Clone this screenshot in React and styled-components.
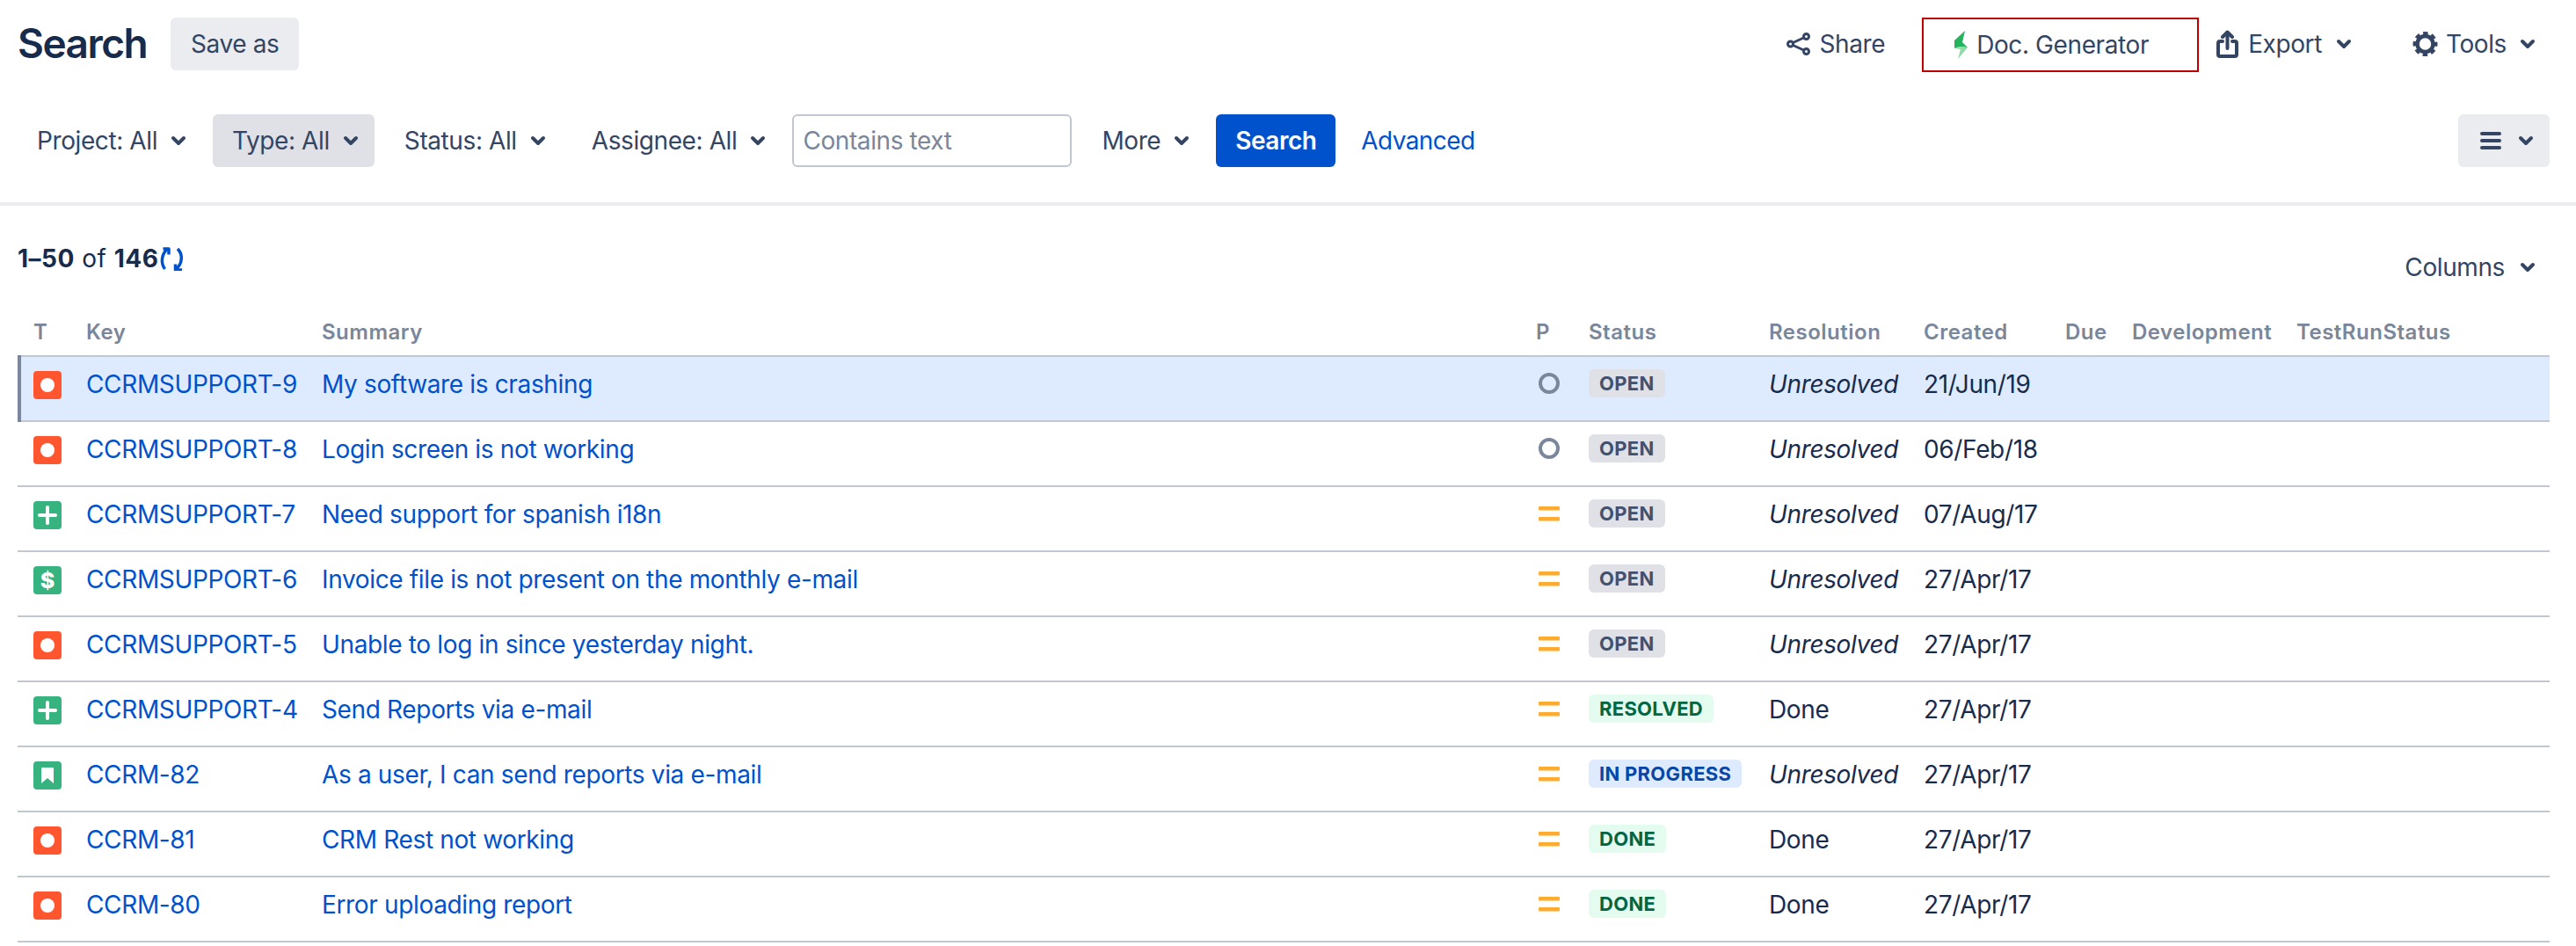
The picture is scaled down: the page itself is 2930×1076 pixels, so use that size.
import React from "react";
import styled, { createGlobalStyle, css } from "styled-components";

const issues = [
  { type: "bug", key: "CCRMSUPPORT-9", summary: "My software is crashing", priority: "low", status: "OPEN", resolution: "Unresolved", created: "21/Jun/19", selected: true },
  { type: "bug", key: "CCRMSUPPORT-8", summary: "Login screen is not working", priority: "low", status: "OPEN", resolution: "Unresolved", created: "06/Feb/18" },
  { type: "feature", key: "CCRMSUPPORT-7", summary: "Need support for spanish i18n", priority: "medium", status: "OPEN", resolution: "Unresolved", created: "07/Aug/17" },
  { type: "billing", key: "CCRMSUPPORT-6", summary: "Invoice file is not present on the monthly e-mail", priority: "medium", status: "OPEN", resolution: "Unresolved", created: "27/Apr/17" },
  { type: "bug", key: "CCRMSUPPORT-5", summary: "Unable to log in since yesterday night.", priority: "medium", status: "OPEN", resolution: "Unresolved", created: "27/Apr/17" },
  { type: "feature", key: "CCRMSUPPORT-4", summary: "Send Reports via e-mail", priority: "medium", status: "RESOLVED", resolution: "Done", created: "27/Apr/17" },
  { type: "story", key: "CCRM-82", summary: "As a user, I can send reports via e-mail", priority: "medium", status: "IN PROGRESS", resolution: "Unresolved", created: "27/Apr/17" },
  { type: "bug", key: "CCRM-81", summary: "CRM Rest not working", priority: "medium", status: "DONE", resolution: "Done", created: "27/Apr/17" },
  { type: "bug", key: "CCRM-80", summary: "Error uploading report", priority: "medium", status: "DONE", resolution: "Done", created: "27/Apr/17" },
];

const headers = ["T", "Key", "Summary", "P", "Status", "Resolution", "Created", "Due", "Development", "TestRunStatus"];

const GlobalStyle = createGlobalStyle`
  html, body {
    margin: 0;
    background: #fff;
  }
  body {
    font-family: Inter, "Liberation Sans", sans-serif;
    font-size: 28px;
    color: #172b4d;
  }
`;

const Page = styled.div`
  width: 2930px;
  height: 1076px;
  overflow: hidden;
`;

const TopBar = styled.header`
  display: flex;
  align-items: flex-start;
  height: 82px;
  box-sizing: border-box;
  padding: 20px 30px 0 20px;
`;

const Title = styled.h1`
  margin: 0 28px 0 0;
  width: 146px;
  font-size: 46px;
  font-weight: 600;
  line-height: 58px;
  letter-spacing: -1.5px;
  white-space: nowrap;
  color: #172b4d;
`;

const plainText = css`
  font-family: inherit;
  font-size: 28px;
  letter-spacing: -0.4px;
  line-height: 40px;
  color: #344563;
`;

const SaveButton = styled.button`
  ${plainText}
  height: 60px;
  padding: 0 23px;
  border: 0;
  border-radius: 6px;
  background: #ebecf0;
`;

const ToolGroup = styled.div`
  display: flex;
  align-items: flex-start;
  margin-left: auto;
`;

const ToolButton = styled.button`
  ${plainText}
  display: flex;
  align-items: center;
  gap: ${(p) => p.$gap || 11}px;
  height: 60px;
  padding: 0 ${(p) => p.$right || 20}px 0 20px;
  margin-right: ${(p) => p.$after || 0}px;
  border: 0;
  background: none;
`;

const DocBox = styled.div`
  ${plainText}
  display: flex;
  align-items: center;
  gap: 9px;
  width: 315px;
  height: 62px;
  box-sizing: border-box;
  padding-left: 35px;
  border: 2px solid #bf0000;
`;

const FilterBar = styled.div`
  display: flex;
  align-items: center;
  gap: 12px;
  height: 60px;
  margin-top: 48px;
  padding: 0 30px 0 20px;
`;

const FilterButton = styled.button`
  ${plainText}
  display: flex;
  align-items: center;
  gap: 15px;
  height: 60px;
  padding: 0 18px 0 22px;
  border: 0;
  border-radius: 6px;
  background: ${(p) => (p.$active ? "#dfe1e6" : "transparent")};
`;

const ViewButton = styled(FilterButton)`
  gap: 19px;
  margin-left: auto;
  padding-left: 25px;
  background: #ebecf0;
`;

const TextField = styled.input`
  ${plainText}
  width: 318px;
  height: 60px;
  box-sizing: border-box;
  padding: 0 10px;
  border: 2px solid #c1c7d0;
  border-radius: 6px;
  outline: 0;
  &::placeholder {
    color: #7a869a;
    opacity: 1;
  }
`;

const SearchButton = styled.button`
  font-family: inherit;
  font-size: 28px;
  font-weight: 600;
  letter-spacing: -0.5px;
  height: 60px;
  padding: 0 22px;
  border: 0;
  border-radius: 6px;
  color: #fff;
  background: #0052cc;
`;

const AdvancedLink = styled.a`
  ${plainText}
  letter-spacing: -0.6px;
  margin-left: 17px;
  color: #0052cc;
`;

const Divider = styled.hr`
  height: 4px;
  margin: 40px 0 0;
  border: 0;
  background: #ebecf0;
`;

const ResultsBar = styled.div`
  display: flex;
  justify-content: space-between;
  align-items: flex-start;
  height: 118px;
  box-sizing: border-box;
  padding: 40px 16px 0 20px;
  margin-right: 30px;
`;

const Count = styled.div`
  display: flex;
  align-items: center;
  gap: 2px;
  line-height: 40px;
  letter-spacing: 0.5px;
  color: #172b4d;
  b {
    font-weight: 700;
  }
`;

const ColumnsButton = styled.button`
  ${plainText}
  display: flex;
  align-items: center;
  gap: 17px;
  margin-top: 10px;
  padding: 0;
  border: 0;
  background: none;
`;

const rowGrid = css`
  display: grid;
  grid-template-columns: 78px 268px 1381px 60px 205px 176px 161px 76px 187px 288px;
  width: 2880px;
  margin-left: 20px;
  box-sizing: border-box;
`;

const HeaderRow = styled.div`
  ${rowGrid}
  align-items: center;
  height: 54px;
  border-bottom: 2px solid #c1c7d0;
  padding-bottom: 2px;
`;

const HeaderCell = styled.div`
  font-size: 24px;
  font-weight: 600;
  letter-spacing: 0.5px;
  color: #7a869a;
  &:first-child {
    padding-left: 18px;
  }
`;

const IssueRow = styled.div`
  ${rowGrid}
  position: relative;
  height: 74px;
  border-bottom: 2px solid #c1c7d0;
  align-items: start;
  background: ${(p) => (p.$selected ? "#deebff" : "transparent")};
  ${(p) =>
    p.$selected &&
    css`
      &::before {
        content: "";
        position: absolute;
        left: 0;
        top: -2px;
        bottom: -2px;
        width: 4px;
        background: #7a869a;
      }
    `}
`;

const TypeCell = styled.div`
  padding: 16px 0 0 18px;
`;

const TextCell = styled.div`
  padding-top: 11px;
  line-height: 40px;
  letter-spacing: -0.35px;
  white-space: nowrap;
  font-style: ${(p) => (p.$italic ? "italic" : "normal")};
  color: #172b4d;
`;

const IssueLink = styled.a`
  color: #0052cc;
`;

const PriorityCell = styled.div`
  display: flex;
  padding: 18px 0 0 2px;
`;

const StatusCell = styled.div`
  display: flex;
  padding-top: 14px;
`;

const lozengeTones = {
  OPEN: css`
    color: #42526e;
    background: #dfe1e6;
  `,
  RESOLVED: css`
    color: #006644;
    background: #e3fcef;
  `,
  DONE: css`
    color: #006644;
    background: #e3fcef;
  `,
  "IN PROGRESS": css`
    color: #0747a6;
    background: #deebff;
  `,
};

const Lozenge = styled.span`
  min-width: 62px;
  height: 32px;
  padding: 0 12px;
  border-radius: 6px;
  font-size: 22px;
  font-weight: 700;
  line-height: 32px;
  letter-spacing: 0.3px;
  text-align: left;
  ${(p) => lozengeTones[p.$status]}
`;

const TypeBadge = styled.div`
  display: flex;
  align-items: center;
  justify-content: center;
  width: 32px;
  height: 32px;
  border-radius: 4px;
  font-size: 25px;
  font-weight: 800;
  color: #fff;
  background: ${(p) => (p.$type === "bug" ? "#ff5630" : "#36b37e")};
`;

const BugDot = styled.span`
  width: 16px;
  height: 16px;
  border-radius: 50%;
  background: #fff;
`;

const ChevronSvg = styled.svg`
  flex: none;
  margin-left: ${(p) => p.$push || 0}px;
`;

const Chevron = ({ push }) => (
  <ChevronSvg $push={push} width="18" height="12" viewBox="0 0 18 12" fill="none">
    <path d="M3 3l6 6 6-6" stroke="#344563" strokeWidth="4" strokeLinecap="round" strokeLinejoin="round" />
  </ChevronSvg>
);

const ShareIcon = () => (
  <svg width="27" height="26" viewBox="0 0 27 26" fill="none" stroke="#344563" strokeWidth="3">
    <circle cx="4.5" cy="13" r="3" />
    <circle cx="22.5" cy="4.5" r="3" />
    <circle cx="22.5" cy="21.5" r="3" />
    <path d="M7.5 11.5l12-5.5M7.5 14.5l12 5.5" />
  </svg>
);

const BoltIcon = () => (
  <svg width="16" height="32" viewBox="0 0 16 32">
    <path d="M12 0L0 11v9l6-2 9 1-6-6z" fill="#23b35c" />
    <path d="M0 20l6-2 9 1L4 32l3-11z" fill="#8fdca9" />
  </svg>
);

const ExportIcon = () => (
  <svg width="25" height="32" viewBox="0 0 25 32" fill="none" stroke="#344563" strokeWidth="4" strokeLinecap="round" strokeLinejoin="round">
    <path d="M7 13H4a2 2 0 0 0-2 2v13a2 2 0 0 0 2 2h17a2 2 0 0 0 2-2V15a2 2 0 0 0-2-2h-3" />
    <path d="M12.5 21V3M7 8l5.500-5.500L18 8" />
  </svg>
);

const GearIcon = () => (
  <svg width="29" height="28" viewBox="0 0 28 28" fill="none" stroke="#344563">
    <circle cx="14" cy="14" r="9" strokeWidth="4.500" />
    <circle cx="14" cy="14" r="12" strokeWidth="4" strokeDasharray="5.420 4" strokeDashoffset="2.710" />
  </svg>
);

const MenuIcon = () => (
  <svg width="24" height="20" viewBox="0 0 24 20" fill="#344563">
    <rect width="24" height="4" rx="2" />
    <rect y="8" width="24" height="4" rx="2" />
    <rect y="16" width="24" height="4" rx="2" />
  </svg>
);

const RefreshIcon = () => (
  <svg width="28" height="27" viewBox="0 0 28 27" fill="none" stroke="#0052cc" strokeWidth="3.500" strokeLinejoin="round">
    <path d="M5.500 25C1 19 1 9 8 2.500" />
    <path d="M3.500 2h6.500v6.500" />
    <path d="M20 2c6 6 6 17-2 23" />
    <path d="M17.500 19.500v6.500H25" />
  </svg>
);

const PriorityIcon = ({ level }) =>
  level === "low" ? (
    <svg width="26" height="24" viewBox="0 0 26 24" fill="none">
      <circle cx="13" cy="12" r="10" stroke="#7a869a" strokeWidth="4" />
    </svg>
  ) : (
    <svg width="26" height="24" viewBox="0 0 26 24" fill="#ffab2e">
      <rect x="1" y="4" width="24" height="4.500" rx="1" />
      <rect x="1" y="16" width="24" height="4.500" rx="1" />
    </svg>
  );

const TypeIcon = ({ type }) => (
  <TypeBadge $type={type}>
    {type === "bug" && <BugDot />}
    {type === "feature" && (
      <svg width="22" height="22" viewBox="0 0 22 22" fill="none">
        <path d="M11 2v18M2 11h18" stroke="#fff" strokeWidth="4" strokeLinecap="round" />
      </svg>
    )}
    {type === "billing" && "$"}
    {type === "story" && (
      <svg width="14" height="18" viewBox="0 0 14 18">
        <path d="M0 1a1 1 0 0 1 1-1h12a1 1 0 0 1 1 1v17l-7-6-7 6z" fill="#fff" />
      </svg>
    )}
  </TypeBadge>
);

export default function App() {
  return (
    <Page>
      <GlobalStyle />
      <TopBar>
        <Title>Search</Title>
        <SaveButton>Save as</SaveButton>
        <ToolGroup>
          <ToolButton $after={22}>
            <ShareIcon />
            Share
          </ToolButton>
          <DocBox>
            <BoltIcon />
            Doc. Generator
          </DocBox>
          <ToolButton $right={18} $after={31}>
            <ExportIcon />
            Export
            <Chevron push={5} />
          </ToolButton>
          <ToolButton $gap={9} $right={16}>
            <GearIcon />
            Tools
            <Chevron push={6} />
          </ToolButton>
        </ToolGroup>
      </TopBar>

      <FilterBar>
        <FilterButton>Project: All<Chevron /></FilterButton>
        <FilterButton $active>Type: All<Chevron /></FilterButton>
        <FilterButton>Status: All<Chevron /></FilterButton>
        <FilterButton>Assignee: All<Chevron /></FilterButton>
        <TextField placeholder="Contains text" />
        <FilterButton>More<Chevron /></FilterButton>
        <SearchButton>Search</SearchButton>
        <AdvancedLink>Advanced</AdvancedLink>
        <ViewButton>
          <MenuIcon />
          <Chevron />
        </ViewButton>
      </FilterBar>

      <Divider />

      <ResultsBar>
        <Count>
          <span><b>1–50</b> of <b>146</b></span>
          <RefreshIcon />
        </Count>
        <ColumnsButton>Columns<Chevron /></ColumnsButton>
      </ResultsBar>

      <HeaderRow>
        {headers.map((h) => (
          <HeaderCell key={h}>{h}</HeaderCell>
        ))}
      </HeaderRow>

      {issues.map((issue) => (
        <IssueRow key={issue.key} $selected={issue.selected}>
          <TypeCell>
            <TypeIcon type={issue.type} />
          </TypeCell>
          <TextCell><IssueLink>{issue.key}</IssueLink></TextCell>
          <TextCell><IssueLink>{issue.summary}</IssueLink></TextCell>
          <PriorityCell>
            <PriorityIcon level={issue.priority} />
          </PriorityCell>
          <StatusCell>
            <Lozenge $status={issue.status}>{issue.status}</Lozenge>
          </StatusCell>
          <TextCell $italic={issue.resolution === "Unresolved"}>{issue.resolution}</TextCell>
          <TextCell>{issue.created}</TextCell>
        </IssueRow>
      ))}
    </Page>
  );
}
